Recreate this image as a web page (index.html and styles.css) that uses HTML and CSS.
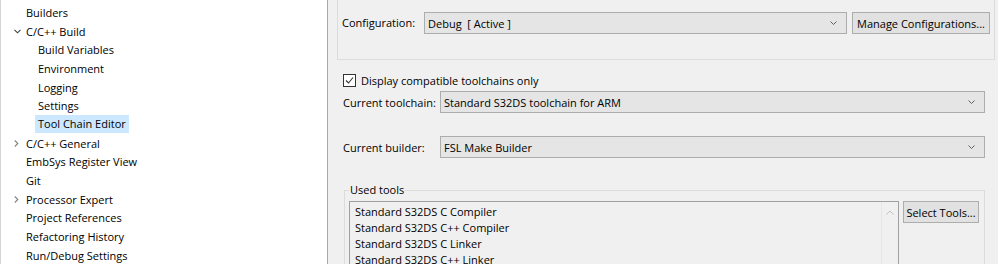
FILE: index.html
```html
<!DOCTYPE html>
<html lang="en">

<head>
    <meta charset="UTF-8">
    <meta name="viewport" content="width=device-width, initial-scale=1.0">
    <title>Tool Chain Editor</title>
    <link rel="stylesheet" href="styles.css">
</head>

<body>

    <div class="window">
        <aside class="tree">
            <ul>
                <li class="lvl1">Builders</li>
                <li class="lvl1">
                    <span class="twisty"><svg width="7" height="5" viewBox="0 0 7 5"><polyline points="0.5,0.8 3.5,3.8 6.5,0.8" fill="none" stroke="#404040" stroke-width="1.1"/></svg></span>C/C++ Build
                </li>
                <li class="lvl2">Build Variables</li>
                <li class="lvl2">Environment</li>
                <li class="lvl2">Logging</li>
                <li class="lvl2">Settings</li>
                <li class="lvl2"><span class="selected">Tool Chain Editor</span></li>
                <li class="lvl1">
                    <span class="twisty"><svg width="5" height="7" viewBox="0 0 5 7"><polyline points="0.8,0.5 3.8,3.5 0.8,6.5" fill="none" stroke="#808080" stroke-width="1.1"/></svg></span>C/C++ General
                </li>
                <li class="lvl1">EmbSys Register View</li>
                <li class="lvl1">Git</li>
                <li class="lvl1">
                    <span class="twisty"><svg width="5" height="7" viewBox="0 0 5 7"><polyline points="0.8,0.5 3.8,3.5 0.8,6.5" fill="none" stroke="#808080" stroke-width="1.1"/></svg></span>Processor Expert
                </li>
                <li class="lvl1">Project References</li>
                <li class="lvl1">Refactoring History</li>
                <li class="lvl1">Run/Debug Settings</li>
            </ul>
        </aside>

        <main class="page">
            <div class="config-box">
                <span class="config-label">Configuration:</span>
                <div class="combo config-combo">
                    <span>Debug&nbsp; [ Active ]</span>
                    <svg width="7" height="4" viewBox="0 0 7 4"><polyline points="0.5,0.5 3.5,3.5 6.5,0.5" fill="none" stroke="#606060"/></svg>
                </div>
                <button class="btn manage-btn">Manage Configurations...</button>
            </div>

            <div class="settings">
                <label class="check-row">
                    <span class="checkbox"><svg width="11" height="11" viewBox="0 0 11 11"><polyline points="2,5.5 4.5,8 9,2.5" fill="none" stroke="#333" stroke-width="1.1"/></svg></span>
                    Display compatible toolchains only
                </label>

                <div class="field-row toolchain-row">
                    <span class="field-label">Current toolchain:</span>
                    <div class="combo">
                        <span>Standard S32DS toolchain for ARM</span>
                        <svg width="7" height="4" viewBox="0 0 7 4"><polyline points="0.5,0.5 3.5,3.5 6.5,0.5" fill="none" stroke="#606060"/></svg>
                    </div>
                </div>

                <div class="field-row builder-row">
                    <span class="field-label">Current builder:</span>
                    <div class="combo">
                        <span>FSL Make Builder</span>
                        <svg width="7" height="4" viewBox="0 0 7 4"><polyline points="0.5,0.5 3.5,3.5 6.5,0.5" fill="none" stroke="#606060"/></svg>
                    </div>
                </div>

                <fieldset class="tools-group">
                    <legend>Used tools</legend>
                    <div class="tools-body">
                        <div class="tools-list">
                            <ul>
                                <li>Standard S32DS C Compiler</li>
                                <li>Standard S32DS C++ Compiler</li>
                                <li>Standard S32DS C Linker</li>
                                <li>Standard S32DS C++ Linker</li>
                            </ul>
                            <div class="scrollbar">
                                <svg width="8" height="5" viewBox="0 0 8 5"><polyline points="0.5,4.5 4,1 7.5,4.5" fill="none" stroke="#c2c2c2"/></svg>
                            </div>
                        </div>
                        <button class="btn select-btn">Select Tools...</button>
                    </div>
                </fieldset>
            </div>
        </main>
    </div>

</body>

</html>
```

FILE: styles.css
```css
body {
    margin: 0;
    height: 264px;
    overflow: hidden;
    background-color: #f0f0f0;
    font-family: "Open Sans", "Noto Sans", sans-serif;
    font-size: 11px;
    color: #000;
}

.window {
    display: flex;
    height: 264px;
}

/* left tree */
.tree {
    flex-shrink: 0;
    width: 328px;
    box-sizing: border-box;
    background: #fff;
    border-left: 1px solid #d4d4d4;
    border-right: 1px solid #a8a8a8;
}

.tree ul {
    list-style: none;
    margin: 0;
    padding: 3px 0 0;
}

.tree li {
    display: flex;
    align-items: center;
    height: 18.7px;
    white-space: nowrap;
}

.tree .lvl1 {
    padding-left: 25px;
    position: relative;
}

.tree .lvl2 {
    padding-left: 37px;
}

.tree .twisty {
    position: absolute;
    left: 13px;
    top: 0;
    height: 100%;
    display: flex;
    align-items: center;
}

.tree .selected {
    background: #cce8ff;
    margin-left: -3px;
    padding: 0 3px;
    line-height: 18px;
}

/* right page */
.page {
    flex: 1;
    min-width: 0;
}

.config-box {
    display: flex;
    align-items: flex-start;
    height: 60px;
    box-sizing: border-box;
    margin: 0 3px 0 9px;
    padding: 12px 0 0 4px;
    border: 1px solid #dcdcdc;
    border-top: none;
}

.config-label {
    width: 82px;
    line-height: 22px;
}

.combo {
    display: flex;
    align-items: center;
    justify-content: space-between;
    height: 22px;
    box-sizing: border-box;
    background: #e5e5e5;
    border: 1px solid #adadad;
    padding: 0 9px 0 3px;
    flex: 1;
}

.config-combo {
    flex: none;
    width: 423px;
}

.btn {
    font-family: inherit;
    font-size: 11px;
    height: 22px;
    box-sizing: border-box;
    background: #e1e1e1;
    border: 1px solid #adadad;
    padding: 0;
    color: #000;
    white-space: nowrap;
}

.manage-btn {
    width: 138px;
    margin-left: 5px;
}

.settings {
    padding: 13px 13px 0 15px;
}

.check-row {
    display: flex;
    align-items: center;
    height: 14px;
    gap: 5px;
}

.checkbox {
    display: flex;
    width: 13px;
    height: 13px;
    box-sizing: border-box;
    border: 1px solid #333;
    background: #fff;
}

.field-row {
    display: flex;
    align-items: center;
}

.toolchain-row {
    margin-top: 4px;
}

.builder-row {
    margin-top: 23px;
}

.field-label {
    width: 97px;
}

.tools-group {
    margin: 24px 0 0 1px;
    padding: 0 5px 0 4px;
    border: 1px solid #dcdcdc;
    min-width: 0;
}

.tools-group legend {
    padding: 0 1px;
    line-height: 16px;
}

.tools-body {
    display: flex;
    align-items: flex-start;
    gap: 4px;
    margin-top: 3px;
}

.tools-list {
    flex: 1;
    display: flex;
    height: 80px;
    border: 1px solid #a0a0a0;
    background: #f0f0f0;
}

.tools-list ul {
    flex: 1;
    list-style: none;
    margin: 0;
    padding: 2px 0 0 5px;
}

.tools-list li {
    line-height: 16px;
    white-space: nowrap;
}

.scrollbar {
    width: 17px;
    border-left: 1px solid #e6e6e6;
    display: flex;
    justify-content: center;
    padding-top: 8px;
    box-sizing: border-box;
}

.select-btn {
    width: 76px;
}
```
